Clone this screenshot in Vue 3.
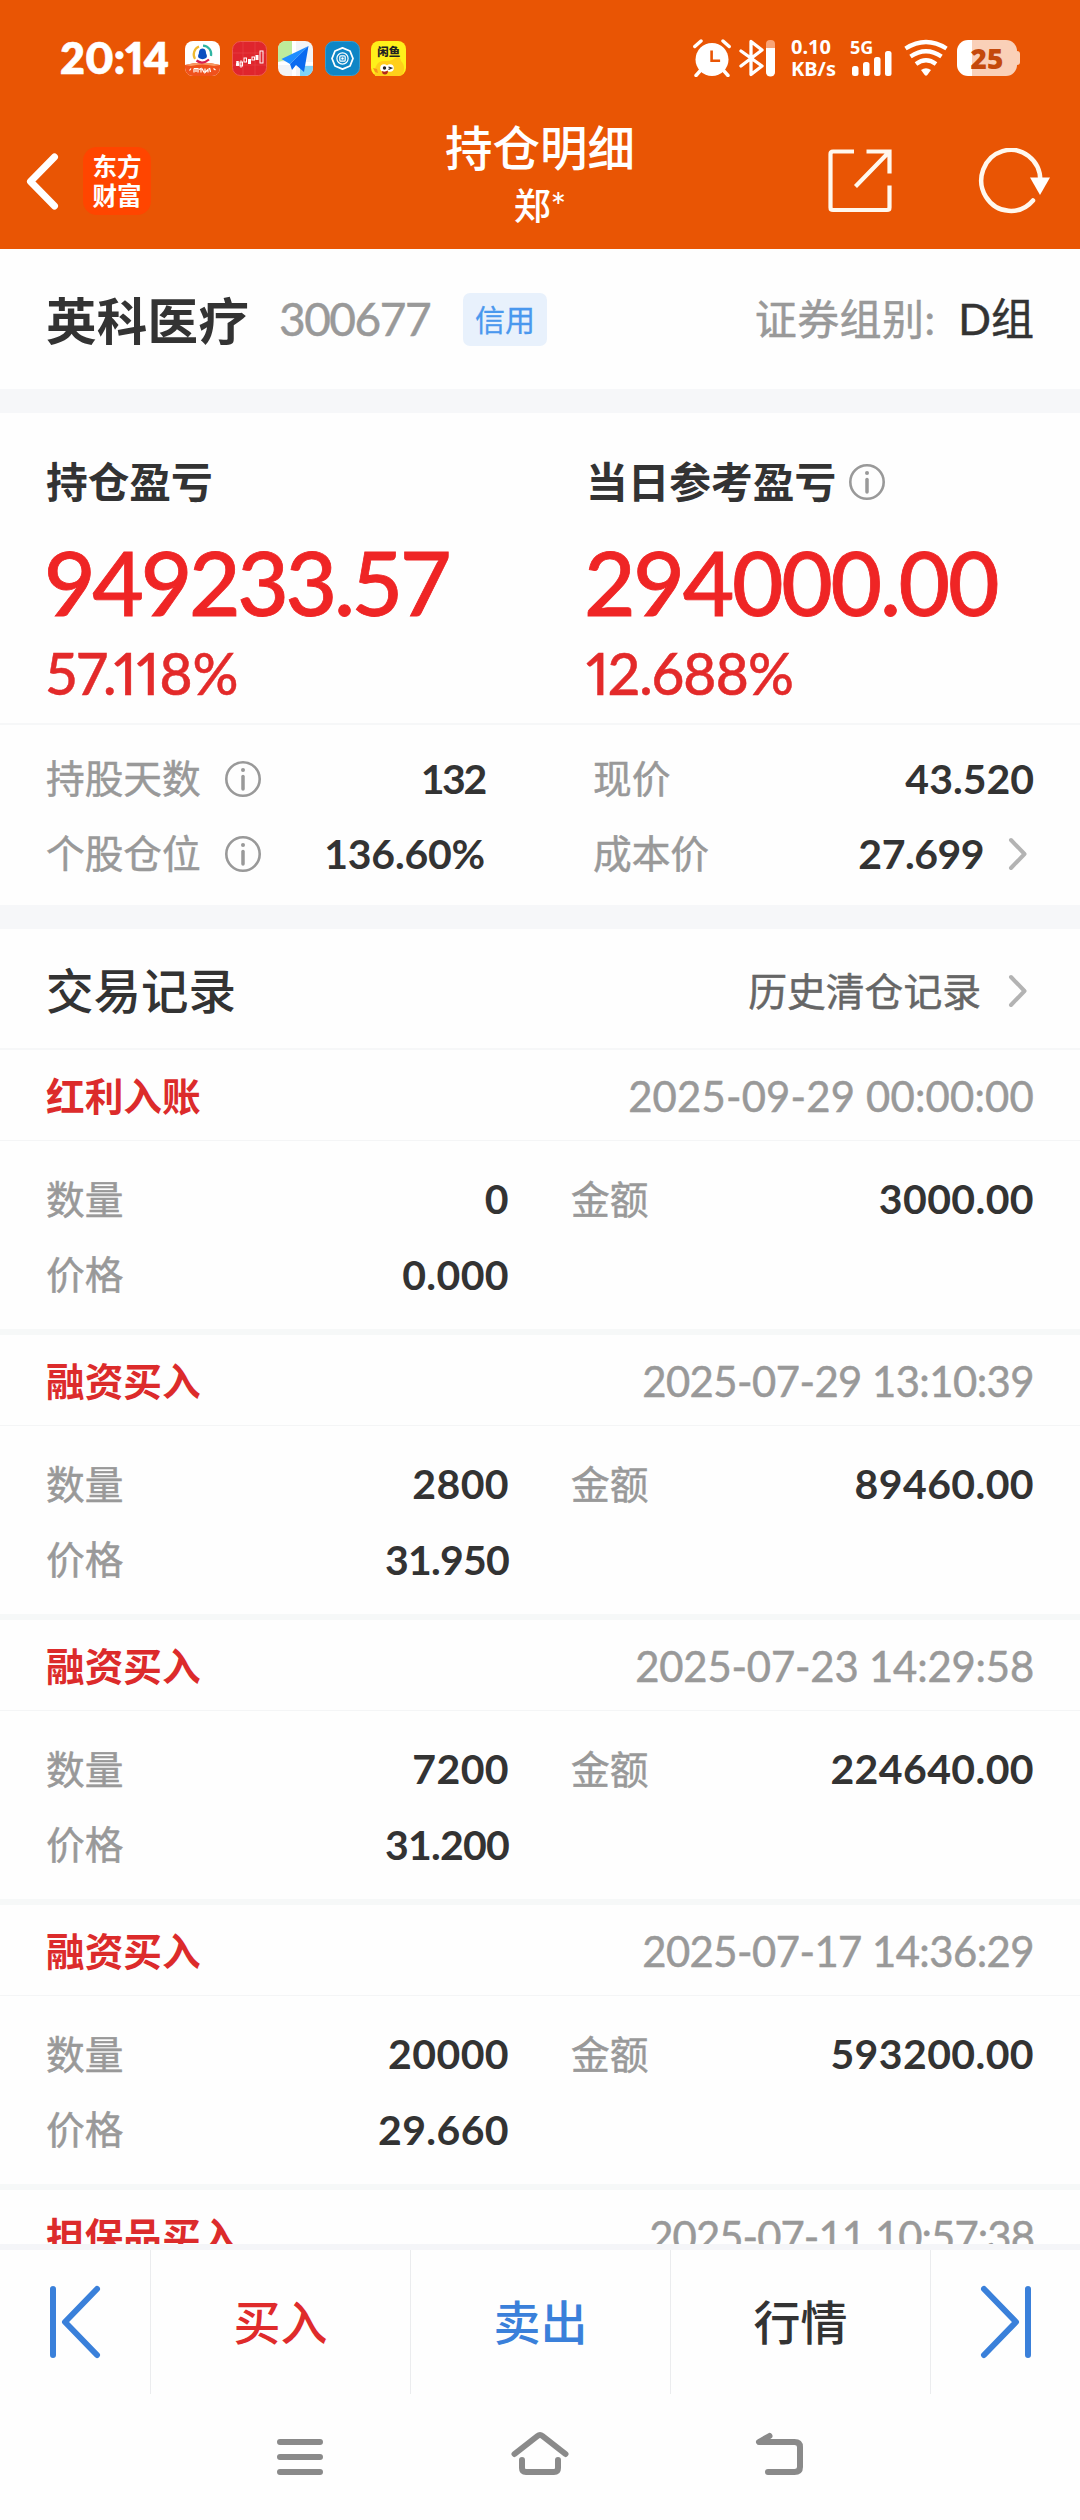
<script setup>
const records = [
  { type: '红利入账', time: '2025-09-29 00:00:00', qty: '0', amount: '3000.00', price: '0.000' },
  { type: '融资买入', time: '2025-07-29 13:10:39', qty: '2800', amount: '89460.00', price: '31.950' },
  { type: '融资买入', time: '2025-07-23 14:29:58', qty: '7200', amount: '224640.00', price: '31.200' },
  { type: '融资买入', time: '2025-07-17 14:36:29', qty: '20000', amount: '593200.00', price: '29.660' },
  { type: '担保品买入', time: '2025-07-11 10:57:38', qty: '', amount: '', price: '' },
]

// Tabular figures leave wide gaps round every "1"; tighten the string by that much.
const track = (text, base = 0.4) => {
  const ones = text.split('1').length - 1
  return { letterSpacing: `${(base - (ones * 7) / text.length).toFixed(2)}px` }
}
</script>

<template>
  <div class="phone">
    <header class="top">
      <div class="status">
        <span class="clock">20:14</span>
        <div class="apps">
          <svg viewBox="0 0 35 35">
            <rect width="35" height="35" rx="8" fill="#fff" />
            <path d="M0 24q17-5 35 0v3a8 8 0 0 1-8 8H8a8 8 0 0 1-8-8z" fill="#f0521c" />
            <path d="M0 24q17-5 35 0l-6 1q-12-3-23 0z" fill="#f79a63" />
            <g fill="none" stroke-width="2.2">
              <path d="M10 18A8.6 8.6 0 0 1 14 5.600" stroke="#efb92f" />
              <path d="M18 4.600A8.600 8.600 0 0 1 26 15" stroke="#2fb5a2" />
              <path d="M11.500 19.500Q17.500 24 24 18.500" stroke="#d81e50" />
            </g>
            <path d="M17.500 7.500c3 0 3.600 3 3.600 5 1.200 2 1 4 0 4.500-2 1.500-5.200 1.500-7.200 0-1-.5-1.200-2.500 0-4.500 0-2 .6-5 3.600-5z" fill="#0b4fc0" />
            <path d="M4.500 29.500l1.500-2M9 27.500v4M9 27.500h4v4M11 28v3M14 28.500l2-1v4M17 27.500l2 4M20 27.500v4l3-3v3M24.500 27l1 4M28.500 27.500l2 1.500" stroke="#fff" stroke-width="1.200" fill="none" />
          </svg>
          <svg viewBox="0 0 35 35">
            <rect x=".5" y=".5" width="34" height="34" rx="8" fill="#df252d" stroke="#ee5a4e" />
            <path d="M11 1v33M23 1v33M1 12h33M1 24h33" stroke="#e8444a" stroke-width=".6" />
            <g stroke="#fff" stroke-width="1" fill="none">
              <path d="M4 23.500h3M5.500 20v5" stroke-width="2.500" />
              <rect x="8" y="21" width="2.500" height="4" /><path d="M9 19v8" stroke-width=".7" />
              <rect x="12" y="17" width="2.500" height="4" />
              <path d="M17.500 18v5" stroke-width="3" />
              <rect x="20" y="16" width="2.500" height="3" />
              <path d="M25 14v5" stroke-width="3" />
              <rect x="28" y="10" width="3" height="12" />
            </g>
          </svg>
          <svg viewBox="0 0 35 35">
            <rect width="35" height="35" rx="8" fill="#f3f4f6" />
            <path d="M8 0h6v17L0 21V8a8 8 0 0 1 8-8z" fill="#bdeb9c" />
            <path d="M22 25h13v2a8 8 0 0 1-8 8h-5z" fill="#7fd3f7" />
            <path d="M14 0h4v35h-4zM0 21h35v3H0z" fill="#fff" />
            <path d="M30.500 5L3.500 18l8.500 5z" fill="#1f8dff" />
            <path d="M30.500 5L12 23l2 6 4-5 8 7z" fill="#0a6af0" />
          </svg>
          <svg viewBox="0 0 35 35">
            <rect x=".5" y=".5" width="34" height="34" rx="8" fill="#0f86c6" stroke="#3b9ccb" />
            <g fill="none" stroke="#fff">
              <path d="M17.500 6.800l7.500 3.200 3 7.500-3 7.500-7.500 3.200-7.500-3.200-3-7.500 3-7.500z" stroke-width="1.800" stroke-linejoin="round" />
              <circle cx="17.500" cy="17.500" r="5.600" stroke-width="1.200" />
              <rect x="14.800" y="14.800" width="5.400" height="5.400" rx="1" stroke-width="1.200" />
            </g>
            <circle cx="17.500" cy="17.500" r="1.200" fill="#fff" />
          </svg>
          <svg viewBox="0 0 35 35">
            <rect width="35" height="35" rx="8" fill="#fff01a" />
            <path d="M4 35c-1-9 2-15 9-15 4 0 8 0 11-3 3-2 6 0 6 3 4 4 4 10 1 14l-4 1z" fill="#ffcf1a" />
            <path d="M2 27l4 1 1 4-3-1z" fill="#f7941d" />
            <circle cx="13" cy="27" r="3.800" fill="#fff" /><circle cx="19" cy="27" r="3.800" fill="#fff" />
            <circle cx="13.500" cy="27" r="1.700" fill="#222" />
            <path d="M17.500 26l3 1-3 1.500" stroke="#222" stroke-width="1.300" fill="none" />
            <path d="M11 30q3 1.500 6-.5 0 4-3 4t-3-3.500z" fill="#b3261e" />
            <text x="17.700" y="15" text-anchor="middle" class="fish">闲鱼</text>
          </svg>
        </div>
        <div class="sys">
          <svg class="alarm" width="38" height="38" viewBox="0 0 38 38">
            <circle cx="19" cy="20.500" r="16.500" fill="#fff" />
            <path d="M1.800 7.500L8 2M36.200 7.500L30 2M7 32l-4 4.500M31 32l4 4.500" stroke="#fff" stroke-width="3.400" stroke-linecap="round" />
            <path d="M18.600 11.500v10.300h8.500" fill="none" stroke="#e95504" stroke-width="2.600" />
          </svg>
          <svg class="bt" width="38" height="38" viewBox="0 0 38 38">
            <path d="M3 12l21 15-11 8.500V2.500L24 11 3 27" fill="none" stroke="#fff" stroke-width="3.300" stroke-linecap="round" stroke-linejoin="round" />
            <rect x="28" y="1" width="9" height="36" rx="4" fill="#f8a477" />
            <path d="M28 9h9v24a4 4 0 0 1-9 0z" fill="#fff" />
          </svg>
          <div class="speed"><span>0.10</span><span>KB/s</span></div>
          <div class="cell">
            <span>5G</span>
            <svg width="42" height="38" viewBox="0 0 42 38" fill="#fff">
              <rect x="1" y="27" width="6.500" height="10" rx="2.500" />
              <rect x="12" y="23" width="6.500" height="14" rx="2.500" />
              <rect x="23" y="18" width="6.500" height="19" rx="2.500" />
              <rect x="34" y="12" width="6.500" height="25" rx="2.500" />
            </svg>
          </div>
          <svg class="wifi" width="44" height="38" viewBox="0 0 44 38">
            <g fill="none" stroke="#fff" stroke-width="4.300">
              <path d="M1.500 9.500Q22-3.500 42.500 9.500" />
              <path d="M6.500 17.500Q22 7 37.500 17.500" />
              <path d="M12 25Q22 17.500 32 25" />
            </g>
            <path d="M17 31q5-3.500 10 0l-3.700 5q-1.300 1.500-2.600 0z" fill="#fff" />
          </svg>
          <div class="batt"><i></i><b>25</b></div>
        </div>
      </div>

      <div class="bar">
        <div class="left">
          <svg class="back" width="33" height="57" viewBox="0 0 33 57">
            <path d="M28.500 4L4.500 28.500l24 24.500" fill="none" stroke="#fff" stroke-width="7" stroke-linecap="round" stroke-linejoin="round" />
          </svg>
          <div class="logo"><span>东方</span><span>财富</span></div>
        </div>
        <div class="title"><h1>持仓明细</h1><p>郑*</p></div>
        <div class="right">
          <svg width="64" height="64" viewBox="0 0 64 64" fill="none" stroke="#fff8ee" stroke-width="4.200">
            <path d="M26 2.500H5q-2.500 0-2.500 2.500v53.500q0 2.500 2.500 2.500h54q2.500 0 2.500-2.500V36.500" />
            <path d="M38.500 2.500h23v22M61 3L27.500 37.500" />
          </svg>
          <svg width="74" height="66" viewBox="0 0 74 66">
            <path d="M61.800 32.500A29.500 30.500 0 1 0 54.500 52.500" fill="none" stroke="#fff8ee" stroke-width="4.500" stroke-linecap="round" transform="translate(.5 0)" />
            <path d="M52 29.500h20L62 47z" fill="#fff" />
          </svg>
        </div>
      </div>
    </header>

    <section class="stock">
      <span class="name">英科医疗</span>
      <span class="code">300677</span>
      <span class="tag">信用</span>
      <span class="group">证券组别:</span>
      <span class="gval">D组</span>
    </section>

    <section class="profit">
      <div class="col">
        <div class="cap">持仓盈亏</div>
        <div class="big b1">949233.57</div>
        <div class="pct p1">57.118%</div>
      </div>
      <div class="col">
        <div class="cap">当日参考盈亏
          <svg class="info" viewBox="0 0 36 36"><circle cx="18" cy="18" r="16.700" /><path d="M18 15.500V28" /><circle class="dot" cx="18" cy="9" r="2" /></svg>
        </div>
        <div class="big b2">294000.00</div>
        <div class="pct p2">12.688%</div>
      </div>
    </section>

    <section class="stats">
      <div class="stat l">
        <span class="lab">持股天数</span>
        <svg class="info" viewBox="0 0 36 36"><circle cx="18" cy="18" r="16.700" /><path d="M18 15.500V28" /><circle class="dot" cx="18" cy="9" r="2" /></svg>
        <span class="val" :style="track('132', 0)">132</span>
      </div>
      <div class="stat"><span class="lab">现价</span><span class="val">43.520</span></div>
      <div class="stat l">
        <span class="lab">个股仓位</span>
        <svg class="info" viewBox="0 0 36 36"><circle cx="18" cy="18" r="16.700" /><path d="M18 15.500V28" /><circle class="dot" cx="18" cy="9" r="2" /></svg>
        <span class="val" :style="track('136.60%', 0.8)">136.60%</span>
      </div>
      <div class="stat">
        <span class="lab">成本价</span><span class="val cost">27.699</span>
        <svg class="chev" viewBox="0 0 20 34"><path d="M3 3l13.500 14L3 31" /></svg>
      </div>
    </section>

    <section class="list">
      <div class="list-head">
        <h2>交易记录</h2>
        <span>历史清仓记录</span>
        <svg class="chev" viewBox="0 0 20 34"><path d="M3 3l13.500 14L3 31" /></svg>
      </div>
      <article v-for="r in records" :key="r.time" class="record">
        <div class="rhead"><b>{{ r.type }}</b><time :style="track(r.time, 0.2)">{{ r.time }}</time></div>
        <div v-if="r.qty" class="rbody">
          <div class="pair"><span class="lab">数量</span><span class="val" :style="track(r.qty)">{{ r.qty }}</span></div>
          <div class="pair"><span class="lab">金额</span><span class="val" :style="track(r.amount)">{{ r.amount }}</span></div>
          <div class="pair"><span class="lab">价格</span><span class="val" :style="track(r.price)">{{ r.price }}</span></div>
        </div>
      </article>
    </section>

    <nav class="actions">
      <button class="edge">
        <svg width="52" height="74" viewBox="0 0 52 74"><path d="M4 4v66M48 4L16 37l32 33" /></svg>
      </button>
      <button class="buy">买入</button>
      <button class="sell">卖出</button>
      <button>行情</button>
      <button class="edge">
        <svg width="52" height="74" viewBox="0 0 52 74"><path d="M48 4v66M4 4l32 33L4 70" /></svg>
      </button>
    </nav>

    <div class="sysnav">
      <svg width="60" height="50" viewBox="0 0 60 50"><path d="M10 13h40M10 28h40M10 43h40" /></svg>
      <svg width="60" height="50" viewBox="0 0 60 50"><path d="M4.500 25L27.500 7q2.500-2 5 0L55.500 25M12 31v8q0 4 4 4h28q4 0 4-4v-8" /></svg>
      <svg width="60" height="50" viewBox="0 0 60 50"><path d="M19.500 7L9 13h35.500q5.500 0 5.500 5v20q0 5-5.500 5H18" /></svg>
    </div>
  </div>
</template>

<style>
body { background: #fefefe; }
</style>

<style scoped>
* { box-sizing: border-box; }
.phone {
  width: 1080px;
  height: 2520px;
  display: flex;
  flex-direction: column;
  overflow: hidden;
  background: #fefefe;
  color: #333;
  font-family: Lato, "Noto Sans CJK SC", sans-serif;
  font-variant-numeric: tabular-nums;
  line-height: 1.2;
  white-space: nowrap;
  -webkit-text-stroke-width: .5px;
}
h1, h2, p { margin: 0; font-weight: 500; -webkit-text-stroke-width: 0; }
svg { display: block; flex: none; }

.top { flex: none; height: 249px; background: #e95504; color: #fff; }
.status { display: flex; align-items: center; height: 116px; padding-left: 60px; }
.clock { width: 125px; font-size: 43px; font-weight: 800; line-height: 50px; font-variant-numeric: proportional-nums; }
.apps { display: flex; gap: 11.600px; }
.apps svg { width: 35px; height: 35px; }
.fish { font: 900 11.500px "Noto Sans CJK SC", sans-serif; fill: #222; stroke: none; -webkit-text-stroke-width: 0; }
.sys { display: flex; align-items: center; margin-left: auto; padding-right: 63px; font-family: "Noto Sans", sans-serif; font-weight: 700; -webkit-text-stroke-width: 0; }
.alarm { margin-right: 7px; }
.speed { width: 59px; margin-left: 15px; display: flex; flex-direction: column; font-size: 20px; line-height: 22.500px; }
.cell { position: relative; width: 54px; padding-left: 1px; }
.cell span { position: absolute; left: 0; top: -2px; font-size: 18px; line-height: 20px; }
.wifi { margin-right: 9px; }
.batt { position: relative; width: 60px; height: 36px; border-radius: 11px; background: linear-gradient(90deg, #fff 15px, #fad0b8 15px); display: flex; align-items: center; justify-content: center; }
.batt i { position: absolute; right: -3px; top: 11px; width: 4px; height: 14px; border-radius: 0 3px 3px 0; background: #fad0b8; }
.batt b { font-size: 28px; line-height: 36px; color: #c4490b; }

.bar { position: relative; display: flex; align-items: center; justify-content: space-between; height: 132px; padding: 0 28px 2px 26px; }
.left { display: flex; align-items: center; gap: 24px; }
.logo { width: 68px; height: 68px; border-radius: 14px; background: #ff4500; display: flex; flex-direction: column; align-items: center; justify-content: center; font-size: 24.500px; font-weight: 700; line-height: 29px; -webkit-text-stroke-width: 0; }
.title { position: absolute; left: 0; right: 0; top: 0; text-align: center; pointer-events: none; }
.title h1 { margin-top: 4px; font-size: 47.500px; line-height: 56px; }
.title p { font-size: 37px; line-height: 60px; }
.right { display: flex; align-items: center; gap: 86px; }

.stock { flex: none; display: flex; align-items: center; height: 140px; padding: 0 46px; }
.name { margin-top: 4px; width: 205px; font-size: 50.500px; font-weight: 700; line-height: 60px; letter-spacing: .3px; -webkit-text-stroke-width: 0; }
.code { margin-left: 28px; width: 184px; font-size: 46px; color: #999; letter-spacing: -1.500px; }
.tag { width: 84px; height: 53px; border-radius: 7px; background: #e8f1fc; color: #4a98ee; font-size: 30px; line-height: 53px; text-align: center; -webkit-text-stroke-width: .3px; }
.group { margin-left: auto; font-size: 42px; color: #999; letter-spacing: .4px; }
.gval { margin-left: 23px; font-size: 43px; }

.profit { flex: none; display: flex; height: 336px; padding-left: 46px; border-top: 24px solid #f6f7f9; border-bottom: 2px solid #f6f7f8; }
.col { flex: none; width: 540px; padding-top: 43px; }
.col + .col { width: 490px; }
.cap { display: flex; align-items: center; font-size: 41.700px; font-weight: 600; line-height: 52px; -webkit-text-stroke-width: 0; }
.info { width: 36px; height: 36px; margin-left: 13px; fill: none; stroke: #999; stroke-width: 2.600; stroke-linecap: round; }
.info path { stroke-width: 3.500; }
.info .dot { fill: #999; stroke: none; }
.big { margin: 19px 0 0 -2px; font-size: 89px; font-weight: 500; line-height: 110px; color: #ef2525; -webkit-text-stroke-width: .8px; }
.b1 { letter-spacing: -3.300px; }
.b2 { letter-spacing: -2.300px; }
.pct { font-size: 57px; font-weight: 500; line-height: 72px; color: #e32a2a; font-variant-numeric: proportional-nums; -webkit-text-stroke-width: .5px; }
.p1 { letter-spacing: -.1px; }
.p2 { letter-spacing: -1px; }

.stats { flex: none; height: 204px; padding: 16px 46px 0 46px; border-bottom: 24px solid #f6f7f9; display: grid; grid-template-columns: 547px 441px; grid-auto-rows: 75px; }
.stat { display: flex; align-items: center; }
.stat.l { padding-right: 108px; }
.stat .info { margin-left: 24px; }
.lab { font-size: 38.700px; color: #999; }
.val { margin-left: auto; font-size: 41px; font-weight: 700; -webkit-text-stroke-width: 0; }
.cost { letter-spacing: -.5px; }
.chev { width: 20px; height: 34px; margin: 0 6px 0 24px; fill: none; stroke: #b3b3b3; stroke-width: 4; stroke-linecap: round; stroke-linejoin: round; }

.list { flex: 1; min-height: 0; overflow: hidden; }
.list-head { display: flex; align-items: center; height: 121px; padding: 5px 46px 0 46px; border-bottom: 2px solid #f6f7f8; }
.list-head h2 { flex: 1; font-size: 47.500px; line-height: 60px; }
.list-head span { font-size: 38.800px; color: #666; }
.list-head .chev { margin-left: 27px; }
.record { height: 285px; border-bottom: 6px solid #f6f8f8; }
.rhead { display: flex; align-items: center; justify-content: space-between; height: 91px; padding: 2px 46px 0 46px; border-bottom: 1px solid #f4f5f6; }
.rhead b { font-size: 38.700px; font-weight: 700; color: #dc2b2b; -webkit-text-stroke-width: 0; }
.rhead time { font-size: 41.800px; color: #999; }
.rbody { display: grid; grid-template-columns: 463px 463px; column-gap: 62px; grid-auto-rows: 75.500px; padding: 20px 0 0 46px; }
.pair { display: flex; align-items: center; }

.actions { flex: none; display: flex; height: 150px; border-top: 6px solid #f4f5f8; }
.actions button { flex: 1; border: 0; border-left: 1px solid #ebecee; padding: 0; background: none; color: #333; font: 500 47px/1.2 Lato, "Noto Sans CJK SC", sans-serif; -webkit-text-stroke-width: 0; display: flex; align-items: center; justify-content: center; }
.actions .buy { color: #df2b2b; }
.actions .sell { color: #3a80da; }
.actions .edge { flex: 0 0 150px; }
.actions .edge:first-child { border-left: 0; }
.edge path { fill: none; stroke: #3a80da; stroke-width: 6; stroke-linecap: round; stroke-linejoin: round; }

.sysnav { flex: none; height: 126px; display: flex; justify-content: center; gap: 180px; padding-top: 35px; }
.sysnav path { fill: none; stroke: #8a8a8a; stroke-width: 6; stroke-linecap: round; stroke-linejoin: round; }
</style>
